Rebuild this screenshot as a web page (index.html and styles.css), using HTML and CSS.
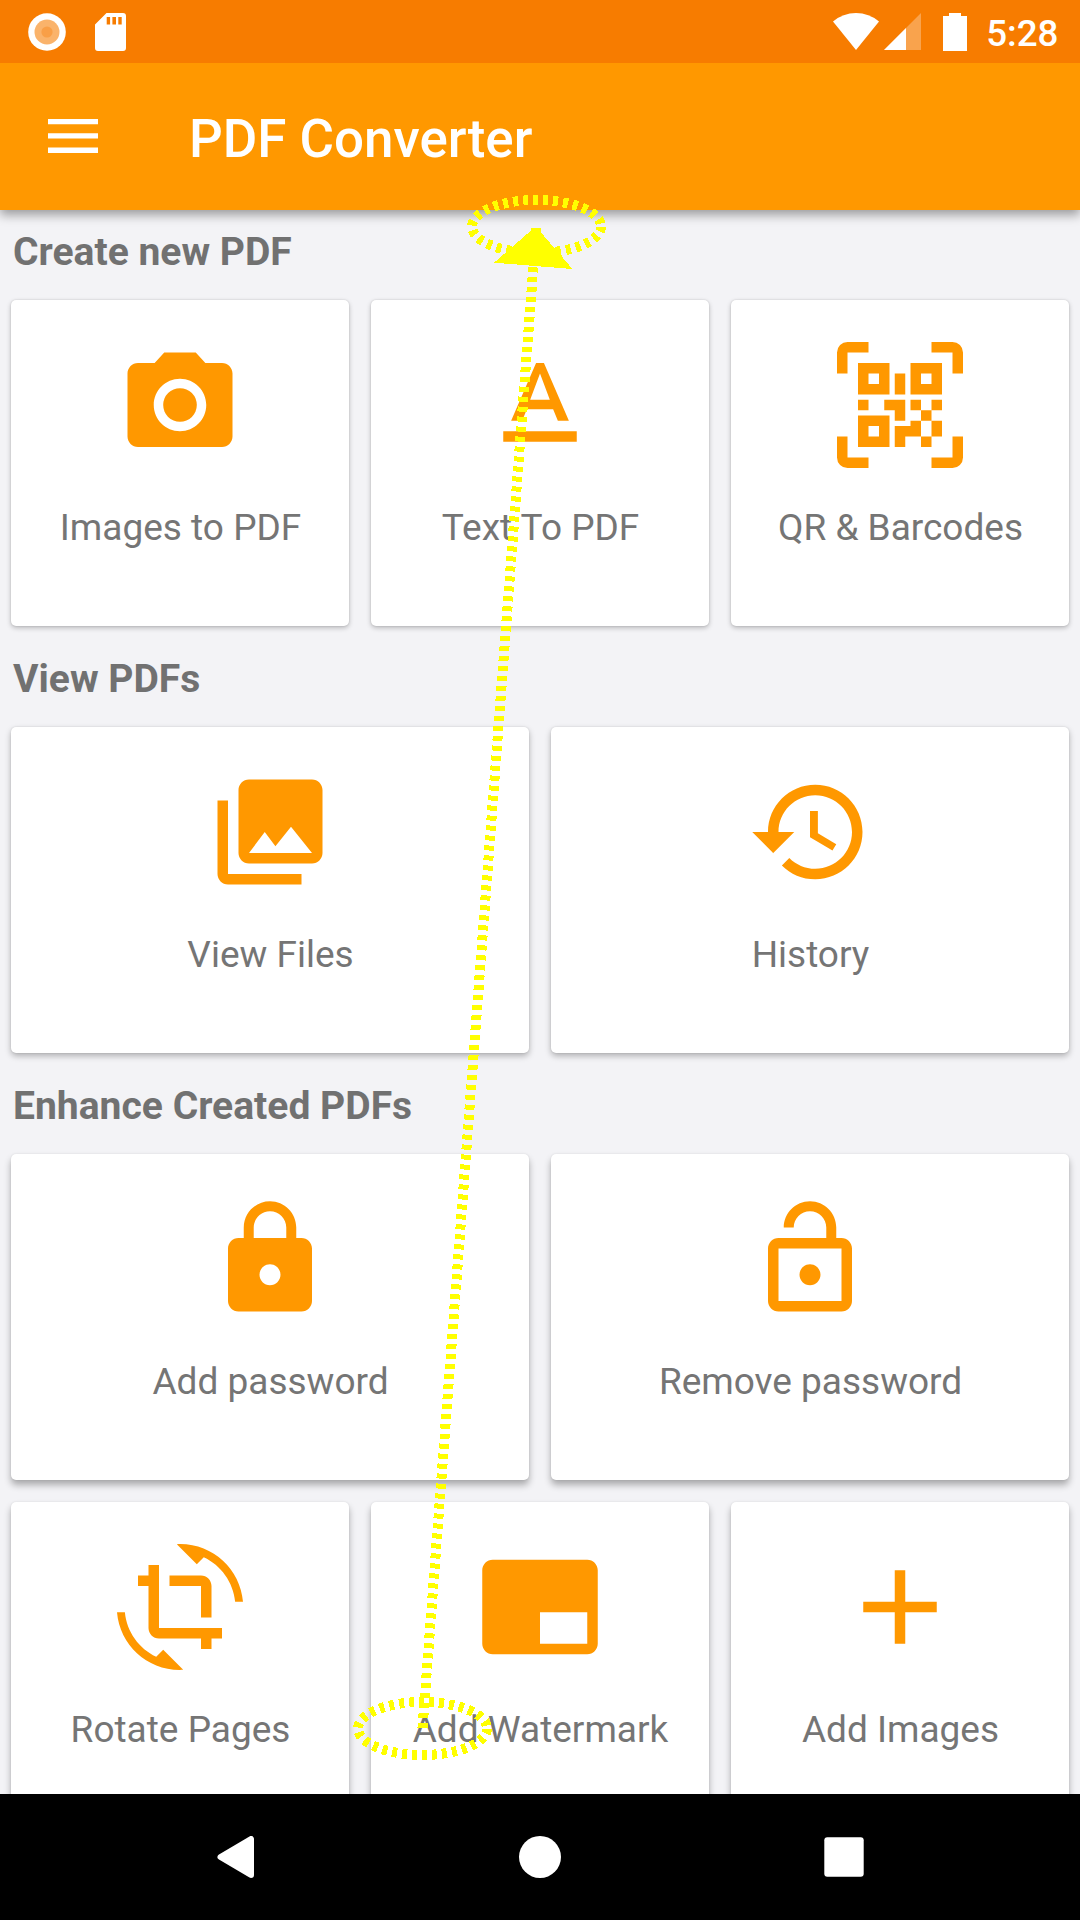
FILE: index.html
```html
<!DOCTYPE html>
<html lang="en">
<head>
<meta charset="utf-8">
<title>PDF Converter</title>
<link rel="stylesheet" href="styles.css">
</head>
<body>
<div class="screen">
  <header class="status-bar">
    <div class="status-group">
      <svg class="status-dot" width="38" height="38" viewBox="0 0 38 38"><circle cx="19" cy="19" r="18.8" fill="#fff"/><circle cx="19" cy="19" r="12.5" fill="#fab36b"/><circle cx="19" cy="19" r="5.6" fill="#f99f47"/></svg>
      <svg width="31" height="38" viewBox="0 0 31 38"><path fill="#fff" fill-rule="evenodd" d="M11.5 0H28a3 3 0 0 1 3 3v32a3 3 0 0 1-3 3H3a3 3 0 0 1-3-3V11.5zM11.7 4v7.6h3.4V4zM17.4 4v7.6h3.6V4zM23.3 4v7.6h3.4V4z"/></svg>
    </div>
    <div class="status-group">
      <svg width="46" height="37" viewBox="0 0 46 37"><path fill="#fff" d="M0 8.5Q10 0 23 0t23 8.5L23 37z"/></svg>
      <svg class="status-cell" width="37" height="37" viewBox="0 0 37 37"><path fill="#fff" fill-opacity=".3" d="M0 37 37 0v37z"/><path fill="#fff" d="M0 37 22 15v22z"/></svg>
      <svg class="status-battery" width="24" height="38" viewBox="0 0 24 38"><path fill="#fff" d="M6 0h12v3h6v35H0V3h6z"/></svg>
      <span class="clock">5:28</span>
    </div>
  </header>
  <div class="toolbar">
    <svg class="menu-icon" width="50" height="34" viewBox="0 0 50 34"><path fill="#fff" d="M0 0h50v5.3H0zM0 14.3h50v5.3H0zM0 28.6h50v5.3H0z"/></svg>
    <h1 class="toolbar-title">PDF Converter</h1>
  </div>
  <main class="content">
    <h2 class="section-title">Create new PDF</h2>
    <div class="row row-low">
      <div class="card">
        <svg class="icon" viewBox="0 0 24 24"><circle cx="12" cy="12" r="3.2"/><path d="M9 2 7.17 4H4c-1.1 0-2 .9-2 2v12c0 1.1.9 2 2 2h16c1.1 0 2-.9 2-2V6c0-1.1-.9-2-2-2h-3.17L15 2H9zm3 15c-2.76 0-5-2.24-5-5s2.240-5 5-5 5 2.240 5 5-2.240 5-5 5z"/></svg>
        <span class="label">Images to PDF</span>
      </div>
      <div class="card">
        <svg class="icon" viewBox="0 0 24 24"><path d="M5 17v2h14v-2H5zm4.500-4.200h5l.9 2.200h2.100L12.750 4h-1.500L6.500 15h2.100l.9-2.200zM12 5.980 13.870 11h-3.740L12 5.980z"/></svg>
        <span class="label">Text To PDF</span>
      </div>
      <div class="card">
        <svg class="icon" viewBox="0 0 24 24"><path fill-rule="evenodd" d="M6 0H2a2 2 0 0 0-2 2v4h2V2h4zM18 0h4a2 2 0 0 1 2 2v4h-2V2h-4zM0 18v4a2 2 0 0 0 2 2h4v-2H2v-4zM24 18v4a2 2 0 0 1-2 2h-4v-2h4v-4zM4 4h6v6H4zM6 6v2h2V6zM14 4h6v6h-6zM16 6v2h2V6zM4 14h6v6H4zM6 16v2h2v-2zM11 6h2v4h-2zM4 11h2v2H4zM9 11h4v4h-2v-2H9zM14 11h2v2h-2zM18 11h2v2h-2zM16 13h2v2h-2zM18 15h2v3h-2zM14 15h2v3h-3v2h-2v-4h3zM16 18h2v2h-2z"/></svg>
        <span class="label">QR &amp; Barcodes</span>
      </div>
    </div>

    <h2 class="section-title">View PDFs</h2>
    <div class="row row-mid">
      <div class="card">
        <svg class="icon" viewBox="0 0 24 24"><path d="M22 16V4c0-1.100-.9-2-2-2H8c-1.100 0-2 .9-2 2v12c0 1.100.9 2 2 2h12c1.100 0 2-.9 2-2zm-14 0 3-4 2.030 2.710L16 11l4 5H8zM2 6v14c0 1.100.9 2 2 2h14v-2H4V6H2z"/></svg>
        <span class="label">View Files</span>
      </div>
      <div class="card">
        <svg class="icon" viewBox="0 0 24 24"><path d="M13 3c-4.970 0-9 4.030-9 9H1l3.890 3.890.07.14L9 12H6c0-3.870 3.130-7 7-7s7 3.130 7 7-3.130 7-7 7c-1.930 0-3.680-.79-4.940-2.060l-1.420 1.420C8.270 19.990 10.510 21 13 21c4.970 0 9-4.030 9-9s-4.030-9-9-9zm-1 5v5l4.280 2.540.72-1.210-3.500-2.080V8H12z"/></svg>
        <span class="label">History</span>
      </div>
    </div>

    <h2 class="section-title">Enhance Created PDFs</h2>
    <div class="row row-high">
      <div class="card">
        <svg class="icon" viewBox="0 0 24 24"><path d="M18 8h-1V6c0-2.760-2.240-5-5-5S7 3.240 7 6v2H6c-1.100 0-2 .9-2 2v10c0 1.100.9 2 2 2h12c1.100 0 2-.9 2-2V10c0-1.100-.9-2-2-2zm-6 9c-1.100 0-2-.9-2-2s.9-2 2-2 2 .9 2 2-.9 2-2 2zm3.100-9H8.900V6c0-1.710 1.390-3.100 3.100-3.100s3.100 1.390 3.100 3.100v2z"/></svg>
        <span class="label">Add password</span>
      </div>
      <div class="card">
        <svg class="icon" viewBox="0 0 24 24"><path d="M12 17c1.100 0 2-.9 2-2s-.9-2-2-2-2 .9-2 2 .9 2 2 2zm6-9h-1V6c0-2.760-2.240-5-5-5S7 3.240 7 6h1.900c0-1.710 1.390-3.100 3.100-3.100s3.100 1.390 3.100 3.100v2H6c-1.100 0-2 .9-2 2v10c0 1.100.9 2 2 2h12c1.100 0 2-.9 2-2V10c0-1.100-.9-2-2-2zm0 12H6V10h12v10z"/></svg>
        <span class="label">Remove password</span>
      </div>
    </div>
    <div class="row row-high">
      <div class="card">
        <svg class="icon" viewBox="0 0 24 24"><path d="M7.470 21.490C4.200 19.930 1.860 16.760 1.500 13H0c.51 6.160 5.660 11 11.950 11 .23 0 .44-.02.66-.03L8.800 20.150l-1.330 1.340zM12.050 0c-.23 0-.44.02-.66.04l3.810 3.810 1.330-1.330C19.800 4.070 22.140 7.240 22.500 11H24c-.51-6.160-5.660-11-11.950-11zM16 14h2V8c0-1.110-.9-2-2-2h-6v2h6v6zm-8 2V4H6v2H4v2h2v8c0 1.100.89 2 2 2h8v2h2v-2h2v-2H8z"/></svg>
        <span class="label">Rotate Pages</span>
      </div>
      <div class="card">
        <svg class="icon" viewBox="0 0 24 24"><path d="M21 3H3c-1.100 0-2 .9-2 2v14c0 1.100.9 2 2 2h18c1.100 0 2-.9 2-2V5c0-1.100-.9-2-2-2zm0 16h-9v-6h9v6z"/></svg>
        <span class="label">Add Watermark</span>
      </div>
      <div class="card">
        <svg class="icon" viewBox="0 0 24 24"><path d="M19 13h-6v6h-2v-6H5v-2h6V5h2v6h6v2z"/></svg>
        <span class="label">Add Images</span>
      </div>
    </div>
  </main>
  <nav class="nav-bar">
    <svg width="42" height="42" viewBox="0 0 42 42"><path fill="#fff" stroke="#fff" stroke-width="6" stroke-linejoin="round" d="M5.500 21 36 3v36z"/></svg>
    <svg width="42" height="42" viewBox="0 0 42 42"><circle cx="21" cy="21" r="21" fill="#fff"/></svg>
    <svg width="42" height="42" viewBox="0 0 42 42"><rect x="1.300" y="1.300" width="39.400" height="39.400" rx="3" fill="#fff"/></svg>
  </nav>
  <!-- Swipe gesture: start and end regions joined by an arrow -->
  <svg class="gesture" width="1080" height="1920" viewBox="0 0 1080 1920" shape-rendering="crispEdges">
    <g fill="none" stroke="#ff0" stroke-width="10" stroke-dasharray="5 5">
      <ellipse cx="536.500" cy="226.500" rx="64.500" ry="26.500"/>
      <ellipse cx="422.500" cy="1728.500" rx="64.500" ry="26.500"/>
      <path d="M422.500 1728 536 232"/>
    </g>
    <path fill="#ff0" d="M531 227.500h10v5L572.500 269 494 262.700 531 230.500z"/>
  </svg>
</div>
</body>
</html>
```
FILE: styles.css
```css
* {
  box-sizing: border-box;
}

body {
  margin: 0;
  font-family: Roboto, "Noto Sans", sans-serif;
  background: #f3f3f6;
}

svg {
  display: block;
  flex: none;
}

.screen {
  position: relative;
  display: flex;
  flex-direction: column;
  width: 1080px;
  height: 1920px;
  overflow: hidden;
}

.status-bar {
  position: relative;
  z-index: 2;
  display: flex;
  flex: none;
  justify-content: space-between;
  height: 63px;
  padding: 0 21.5px 0 28px;
  background: #f77c00;
}

.status-group {
  display: flex;
  align-items: flex-start;
  padding-top: 12.5px;
}

.status-dot {
  margin-right: 29px;
}

.status-cell {
  margin-left: 5.5px;
}

.status-battery {
  margin-left: 22px;
}

.clock {
  margin: -1px 0 0 19px;
  color: #fff;
  font-size: 36.75px;
  font-weight: 500;
  line-height: 43px;
}

.toolbar {
  position: relative;
  z-index: 1;
  display: flex;
  flex: none;
  align-items: center;
  gap: 91px;
  height: 147px;
  padding-left: 48px;
  background: #ff9800;
  box-shadow: 0 5px 10px rgba(0, 0, 0, 0.36);
}

.menu-icon {
  margin-bottom: 2px;
}

.toolbar-title {
  margin: 4px 0 0;
  color: #fff;
  font-size: 52.9px;
  font-weight: 500;
  line-height: 62px;
}

.content {
  display: flex;
  flex: 1;
  flex-direction: column;
  min-height: 0;
  overflow: hidden;
}

.section-title {
  flex: none;
  height: 79px;
  margin: 0;
  padding: 19px 0 0 13px;
  color: #717171;
  font-size: 39.05px;
  font-weight: 700;
  line-height: 46px;
}

.row {
  display: flex;
  flex: none;
  gap: 22px;
  padding: 11px;
}

.card {
  display: flex;
  flex: 1 1 0;
  flex-direction: column;
  align-items: center;
  height: 326px;
  padding-top: 42px;
  border-radius: 5px;
  background: #fff;
}

.row-low .card {
  box-shadow: 0 2px 5px rgba(0, 0, 0, 0.24), 0 0 2px rgba(0, 0, 0, 0.14);
}

.row-mid .card {
  box-shadow: 0 3px 6px rgba(0, 0, 0, 0.28), 0 0 2px rgba(0, 0, 0, 0.12);
}

.row-high .card {
  box-shadow: 0 5px 7px rgba(0, 0, 0, 0.3), 0 0 2px rgba(0, 0, 0, 0.1);
}

.icon {
  width: 126px;
  height: 126px;
  fill: #ff9800;
}

.label {
  margin-top: 38px;
  padding-left: 1px;
  color: #757575;
  font-size: 37px;
  line-height: 43px;
  white-space: nowrap;
}

.nav-bar {
  display: flex;
  flex: none;
  align-items: center;
  justify-content: center;
  gap: 262px;
  height: 126px;
  background: #000;
}

.gesture {
  position: absolute;
  z-index: 3;
  top: 0;
  left: 0;
  pointer-events: none;
}
```
